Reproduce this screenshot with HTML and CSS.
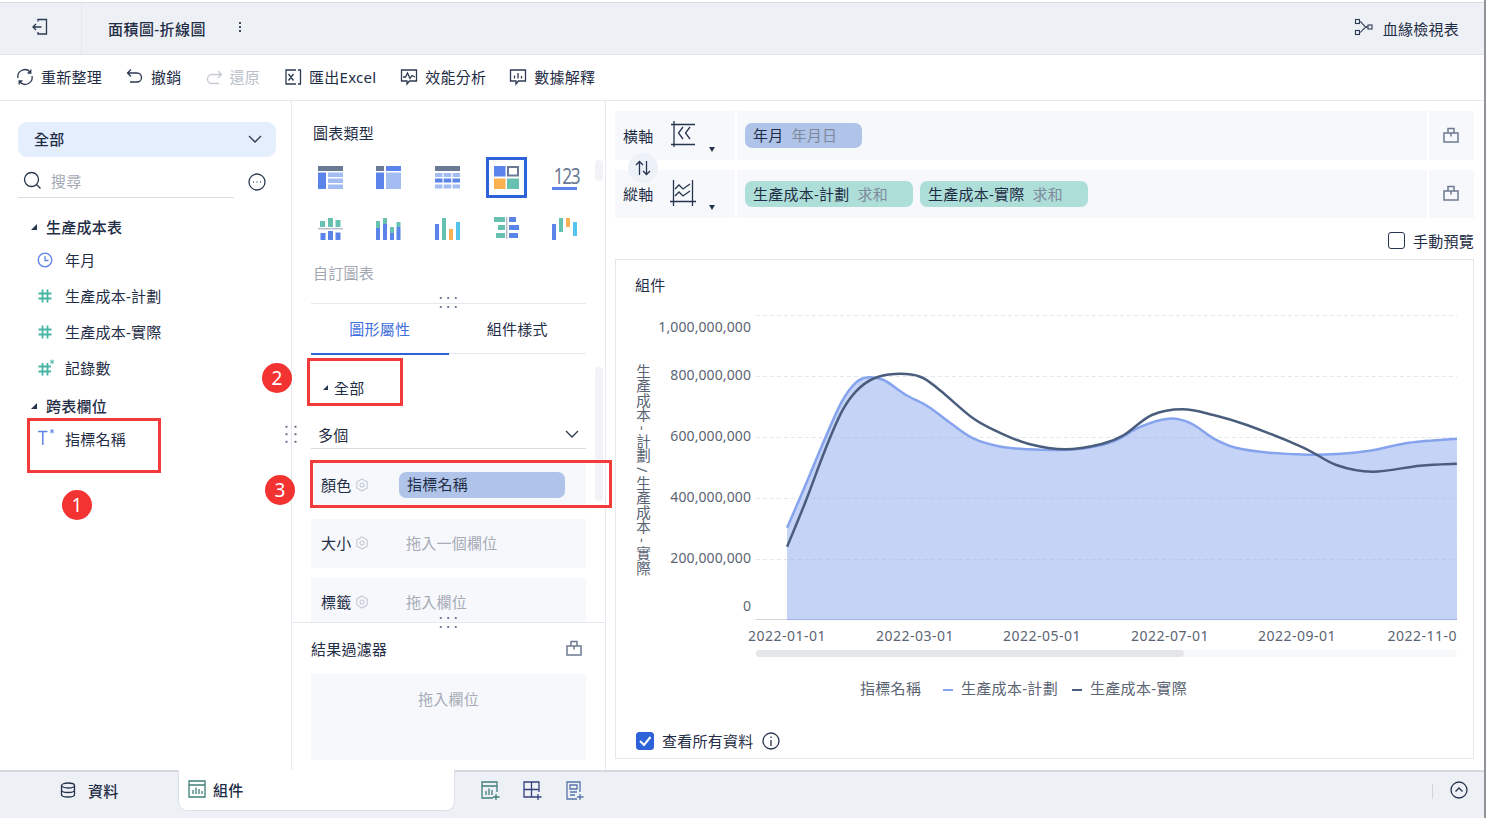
FILE: index.html
```html
<!DOCTYPE html>
<html lang="zh-Hant">
<head>
<meta charset="utf-8">
<title>面積圖-折線圖</title>
<link rel="stylesheet" href="styles.css">
</head>
<body>
<div class="app">
  <header class="titlebar">
    <div class="back">
      <svg width="18" height="18" viewBox="0 0 18 18" class="ic"><path d="M7 3.5V1.5H15.5V16H7V14M10.5 9H2M5 6L2 9L5 12"/></svg>
    </div>
    <div class="doc-title">面積圖-折線圖</div>
    <div class="kebab"><i></i><i></i><i></i></div>
    <div class="lineage">
      <svg width="20" height="18" viewBox="0 0 20 18" class="ic"><rect x="1.5" y="1.5" width="4" height="4"/><rect x="1.5" y="12.5" width="4" height="4"/><rect x="14" y="7" width="4" height="4"/><path d="M5.5 3.5C9 3.5 8 9 14 9M5.5 14.5C9 14.5 8 9 14 9"/></svg>
      <span>血緣檢視表</span>
    </div>
  </header>

  <nav class="toolbar">
    <div class="tool t1"><svg width="18" height="18" viewBox="0 0 18 18" class="ic"><path d="M2 10A7 7 0 0 1 14.5 4.5M16 8A7 7 0 0 1 3.5 13.5M14.8 1.5V5H11.5M3.2 16.5V13H6.5"/></svg><span>重新整理</span></div>
    <div class="tool t2"><svg width="18" height="18" viewBox="0 0 18 18" class="ic"><path d="M5 1.5L1.5 5L5 8.5M1.5 5H11A4.5 4.5 0 0 1 11 14H4"/></svg><span>撤銷</span></div>
    <div class="tool t3 off"><svg width="18" height="18" viewBox="0 0 18 18" class="ic"><path d="M13 3L16.5 6.500L13 10M16.500 6.500H7A4.500 4.500 0 0 0 7 15.500H14"/></svg><span>還原</span></div>
    <div class="tool t4"><svg width="18" height="18" viewBox="0 0 18 18" class="ic"><path d="M12 2H2V16H12M14 2H16.500V16H14M4.500 6L9.500 12.500M9.500 6L4.500 12.500"/></svg><span>匯出Excel</span></div>
    <div class="tool t5"><svg width="18" height="18" viewBox="0 0 18 18" class="ic"><path d="M1.500 2H16.500V13H9.500L7 16V13H1.500ZM3 9H5.500L7.500 5L10 10.500L12 7.500L15 9"/></svg><span>效能分析</span></div>
    <div class="tool t6"><svg width="18" height="18" viewBox="0 0 18 18" class="ic"><path d="M1.500 2H16.500V13H9.500L7 16V13H1.500ZM5.500 7.500V10.500M9 5V10.500M12.500 8V10.500"/></svg><span>數據解釋</span></div>
  </nav>

  <main class="workspace">
    <aside class="fields">
      <div class="scope"><span>全部</span><svg width="14" height="8" viewBox="0 0 14 8" class="ic"><path d="M1 1L7 7L13 1"/></svg></div>
      <div class="search-row">
        <div class="search">
          <svg width="19" height="19" viewBox="0 0 19 19" class="ic dark"><circle cx="8.500" cy="8.500" r="7"/><path d="M13.500 13.500L17.500 17.500"/></svg>
          <span>搜尋</span>
        </div>
        <svg width="18" height="18" viewBox="0 0 18 18" class="ic more"><circle cx="9" cy="9" r="8"/><path d="M5 9H5.800M8.600 9H9.400M12.200 9H13" stroke-width="1.600"/></svg>
      </div>
      <div class="group"><i class="tri"></i>生產成本表</div>
      <div class="field"><svg width="16" height="16" viewBox="0 0 16 16" class="ic blue"><circle cx="8" cy="8" r="6.800"/><path d="M8 4V8.500H11.500"/></svg><span>年月</span></div>
      <div class="field"><svg width="16" height="16" viewBox="0 0 16 16" class="ic teal"><path d="M5.500 1.500V14.500M10.500 1.500V14.500M1.500 5.500H14.500M1.500 10.500H14.500"/></svg><span>生產成本-計劃</span></div>
      <div class="field"><svg width="16" height="16" viewBox="0 0 16 16" class="ic teal"><path d="M5.500 1.500V14.500M10.500 1.500V14.500M1.500 5.500H14.500M1.500 10.500H14.500"/></svg><span>生產成本-實際</span></div>
      <div class="field"><svg width="18" height="18" viewBox="0 0 18 18" class="ic teal"><path d="M5.500 4V16.500M10.500 4V16.500M1.500 7.500H14M1.500 12.500H14"/><path class="star" d="M15 0.500V5M13 1.500L17 4M17 1.500L13 4"/></svg><span class="after-wide">記錄數</span></div>
      <div class="group second"><i class="tri"></i>跨表欄位</div>
      <div class="field"><svg width="18" height="18" viewBox="0 0 18 18" class="ic blue t-icon"><path d="M1 3.500H10.500M5.800 3.500V17"/><path class="star" d="M15 1V5.500M13 2L17 4.500M17 2L13 4.500"/></svg><span class="after-wide">指標名稱</span></div>
    </aside>

    <section class="config">
      <div class="chart-types">
        <h3 class="label">圖表類型</h3>
        <div class="type-grid">
          <div class="type"><svg width="25" height="23" viewBox="0 0 25 23"><rect class="g" width="25" height="5"/><rect class="b" y="6.500" width="8" height="16.500"/><rect class="l" x="10" y="6.500" width="15" height="4.500"/><rect class="l" x="10" y="12.500" width="15" height="4.500"/><rect class="l" x="10" y="18.500" width="15" height="4.500"/></svg></div>
          <div class="type"><svg width="25" height="23" viewBox="0 0 25 23"><rect class="g" width="8" height="5"/><rect class="b" x="10" width="15" height="5"/><rect class="b" y="6.500" width="8" height="16.500"/><rect class="l" x="10" y="6.500" width="15" height="16.500"/></svg></div>
          <div class="type"><svg width="25" height="23" viewBox="0 0 25 23"><rect class="g" width="25" height="5"/><rect class="l" y="7" width="7.500" height="4"/><rect class="l" x="8.700" y="7" width="7.500" height="4"/><rect class="l" x="17.500" y="7" width="7.500" height="4"/><rect class="b" y="12.500" width="7.500" height="4"/><rect class="b" x="8.700" y="12.500" width="7.500" height="4"/><rect class="b" x="17.500" y="12.500" width="7.500" height="4"/><rect class="l" y="18.500" width="7.500" height="4"/><rect class="l" x="8.700" y="18.500" width="7.500" height="4"/><rect class="l" x="17.500" y="18.500" width="7.500" height="4"/></svg></div>
          <div class="type selected"><svg width="25" height="23" viewBox="0 0 25 23"><rect class="b" width="11.500" height="10.500"/><rect x="14" y="1" width="10" height="8.500" fill="#fff" stroke="#6b7a94" stroke-width="2"/><rect class="o" y="12.500" width="11.500" height="10.500"/><rect class="t" x="13" y="12.500" width="12" height="10.500"/></svg></div>
          <div class="type"><div class="num"><span>123</span><i></i></div></div>
          <div class="type"><svg width="25" height="23" viewBox="0 0 25 23"><rect class="t" x="2" y="4" width="5" height="6"/><rect class="t" x="10" y="1" width="5" height="9"/><rect class="t" x="17.500" y="3" width="5" height="7"/><rect class="g2" y="11" width="25" height="1.500"/><rect class="b" x="2.500" y="16" width="5" height="7"/><rect class="b" x="10" y="14" width="5" height="9"/><rect class="b" x="17.500" y="15.500" width="5" height="7.500"/></svg></div>
          <div class="type"><svg width="25" height="23" viewBox="0 0 25 23"><rect class="t" y="4" width="4" height="7"/><rect class="b" y="11" width="4" height="12"/><rect class="t" x="7" y="1" width="4" height="6"/><rect class="b" x="7" y="7" width="4" height="16"/><rect class="t" x="14" y="10" width="4" height="6"/><rect class="b" x="14" y="16" width="4" height="7"/><rect class="t" x="20.500" y="5" width="4" height="5"/><rect class="b" x="20.500" y="10" width="4" height="13"/></svg></div>
          <div class="type"><svg width="25" height="23" viewBox="0 0 25 23"><rect class="b" y="7" width="4" height="16"/><rect class="t" x="7" y="1" width="4" height="22"/><rect class="o" x="14" y="12" width="4" height="11"/><rect class="c" x="21" y="5" width="4" height="18"/></svg></div>
          <div class="type"><svg width="25" height="23" viewBox="0 0 25 23"><rect class="t" width="11" height="5"/><rect class="t" x="4" y="8" width="7" height="5"/><rect class="t" x="2" y="16" width="9" height="5"/><rect class="g2" x="12" width="1.500" height="22"/><rect class="b" x="15" width="7" height="5"/><rect class="b" x="15" y="8" width="10" height="5"/><rect class="b" x="15" y="16" width="9" height="5"/></svg></div>
          <div class="type"><svg width="25" height="23" viewBox="0 0 25 23"><rect class="b" y="7" width="4" height="16"/><rect class="t" x="7" y="1" width="4" height="14"/><rect class="o" x="14" y="1" width="4" height="9"/><rect class="c" x="21" y="5" width="4" height="14"/></svg></div>
        </div>
        <div class="custom">自訂圖表</div>
      </div>
      <div class="props">
        <div class="tabs"><div class="tab active">圖形屬性</div><div class="tab">組件樣式</div></div>
        <div class="all"><i class="tri"></i>全部</div>
        <div class="multi"><span>多個</span><svg width="14" height="8" viewBox="0 0 14 8" class="ic"><path d="M1 1L7 7L13 1"/></svg></div>
        <div class="slot s-color"><label>顏色</label><svg width="14" height="14" viewBox="0 0 14 14" class="gear"><path d="M7 1L12.200 4V10L7 13L1.800 10V4Z"/><circle cx="7" cy="7" r="2"/></svg><div class="pill blue-pill">指標名稱</div></div>
        <div class="slot s-size"><label>大小</label><svg width="14" height="14" viewBox="0 0 14 14" class="gear"><path d="M7 1L12.200 4V10L7 13L1.800 10V4Z"/><circle cx="7" cy="7" r="2"/></svg><span class="hint">拖入一個欄位</span></div>
        <div class="slot s-tag"><label>標籤</label><svg width="14" height="14" viewBox="0 0 14 14" class="gear"><path d="M7 1L12.200 4V10L7 13L1.800 10V4Z"/><circle cx="7" cy="7" r="2"/></svg><span class="hint">拖入欄位</span></div>
        <div class="grip h bottom-grip"></div>
      </div>
      <div class="filter">
        <div class="grip h filter-grip"></div>
        <div class="filter-head"><span>結果過濾器</span><svg width="16" height="16" viewBox="0 0 16 16" class="ic lock"><path d="M1 6H15V15H1ZM5 6V1.500H11V6M8 6V9.500"/></svg></div>
        <div class="drop">拖入欄位</div>
      </div>
      <div class="grip h g-a"></div>
      <div class="grip h g-b"></div>
      <div class="thumb th1"></div>
      <div class="thumb th2"></div>
    </section>

    <section class="canvas">
      <div class="axis first">
        <div class="axis-name"><span>橫軸</span>
          <svg width="26" height="26" viewBox="0 0 26 26" class="ic dark"><path d="M1 3.500H25M1 23.500H25M4 0V26M13 6L8.500 12L13 18M20 6L15.500 12L20 18"/></svg><i class="caret"></i>
        </div>
        <div class="axis-body"><div class="pill blue-pill wide"><span>年月</span><em>年月日</em></div></div>
        <div class="axis-lock"><svg width="16" height="16" viewBox="0 0 16 16" class="ic lock"><path d="M1 6H15V15H1ZM5 6V1.500H11V6M8 6V9.500"/></svg></div>
      </div>
      <div class="axis second">
        <div class="axis-name"><span>縱軸</span>
          <svg width="26" height="26" viewBox="0 0 26 26" class="ic dark"><path d="M0 21.500H26M3.500 0V26M22.500 0V26M5 9L9 5L13 9L20 4M5 16L9 12L13 16L20 11"/></svg><i class="caret"></i>
        </div>
        <div class="axis-body"><div class="pill teal-pill"><span>生產成本-計劃</span><em>求和</em></div><div class="pill teal-pill"><span>生產成本-實際</span><em>求和</em></div></div>
        <div class="axis-lock"><svg width="16" height="16" viewBox="0 0 16 16" class="ic lock"><path d="M1 6H15V15H1ZM5 6V1.500H11V6M8 6V9.500"/></svg></div>
      </div>
      <div class="swap"><svg width="16" height="16" viewBox="0 0 16 16" class="ic dark"><path d="M4.500 15V1.500M1 5L4.500 1.500L8 5M11.500 1V14.500M8 11L11.500 14.500L15 11"/></svg></div>
      <div class="manual"><i class="box"></i><span>手動預覽</span></div>
      <div class="card">
        <div class="card-title">組件</div>
        <svg class="chart" width="857" height="410" viewBox="616 300 857 410">
          <g class="grid">
            <path d="M755.800 315.500H1457M755.800 376.500H1457M755.800 437.500H1457M755.800 498.500H1457M755.800 559.500H1457"/>
          </g>
          <path id="area" fill="#8aa8ee" fill-opacity="0.5"/>
          <path d="M755.800 619.500H1457" stroke="#cfd3da" stroke-width="1"/>
          <path d="M787 619.500H1457" stroke="#9db3e3" stroke-width="1"/>
          <path id="plan" fill="none" stroke="#86a4ee" stroke-width="2.500"/>
          <path id="actual" fill="none" stroke="#4a5d7d" stroke-width="2.500"/>
          <g class="ylab">
            <text x="751" y="332">1,000,000,000</text>
            <text x="751" y="380">800,000,000</text>
            <text x="751" y="441">600,000,000</text>
            <text x="751" y="502">400,000,000</text>
            <text x="751" y="563">200,000,000</text>
            <text x="751" y="611">0</text>
          </g>
          <g class="xlab">
            <text x="787" y="641">2022-01-01</text>
            <text x="915" y="641">2022-03-01</text>
            <text x="1042" y="641">2022-05-01</text>
            <text x="1170" y="641">2022-07-01</text>
            <text x="1297" y="641">2022-09-01</text>
            <text x="1457" y="641" class="end">2022-11-0</text>
          </g>
          <text class="ytitle" x="643" y="364">生產成本 - 計劃 / 生產成本 - 實際</text>
          <rect x="755.800" y="650" width="701" height="7" rx="3.500" fill="#f6f7f8"/>
          <rect x="755.800" y="650" width="428" height="7" rx="3.500" fill="#e3e5e9"/>
          <g class="legend">
            <text x="860" y="694">指標名稱</text>
            <rect x="943" y="689" width="10" height="2" fill="#86a4ee"/>
            <text x="961" y="694">生產成本-計劃</text>
            <rect x="1072" y="689" width="10" height="2" fill="#4a5d7d"/>
            <text x="1090" y="694">生產成本-實際</text>
          </g>
        </svg>
        <div class="see-all">
          <i class="box on"><svg width="18" height="18" viewBox="0 0 18 18"><path d="M4 9L8 13L14.500 5" fill="none" stroke="#fff" stroke-width="2"/></svg></i>
          <span>查看所有資料</span>
          <svg width="18" height="18" viewBox="0 0 18 18" class="ic dark"><circle cx="9" cy="9" r="8"/><path d="M9 8V14M9 4.500V6"/></svg>
        </div>
      </div>
    </section>
  </main>

  <footer class="bottom">
    <div class="btab data"><svg width="16" height="16" viewBox="0 0 16 16" class="ic dark"><ellipse cx="8" cy="3.500" rx="6.500" ry="2.500"/><path d="M1.500 3.500V12.500C1.500 14 4.500 15 8 15S14.500 14 14.500 12.500V3.500M1.500 8C1.500 9.500 4.500 10.500 8 10.500S14.500 9.500 14.500 8"/></svg><span>資料</span></div>
    <div class="btab comp"><svg width="18" height="18" viewBox="0 0 18 18" class="ic green"><path d="M1 1H17V17H1ZM1 5H17M5 14V10M8 14V7.500M11 14V9M14 14V11"/></svg><span>組件</span></div>
    <div class="adders">
      <svg width="20" height="20" viewBox="0 0 20 20" class="ic green"><path d="M12 17H1V1H16V11M1 5H16M5 14V10M8 14V7.500M11 14V9M15 13V19M12 16H18.500"/></svg>
      <svg width="20" height="20" viewBox="0 0 20 20" class="ic navy"><path d="M12 16H1V1H16V11M8.500 1V16M1 8.500H16M15 13V19M12 16H18.500"/></svg>
      <svg width="20" height="20" viewBox="0 0 20 20" class="ic steel"><path d="M12 18H2V1H15V11M5 4H12V8H5ZM5 11H12M5 14H10M15 13V19M12 16H18.500"/></svg>
    </div>
    <div class="collapse"><svg width="18" height="18" viewBox="0 0 18 18" class="ic dark"><circle cx="9" cy="9" r="8"/><path d="M5.500 10.500L9 7L12.500 10.500"/></svg></div>
  </footer>

  <div class="mark m1"></div>
  <div class="mark m2"></div>
  <div class="mark m3"></div>
  <div class="badge b1">1</div>
  <div class="badge b2">2</div>
  <div class="badge b3">3</div>
  <div class="grip v"></div>
</div>
<script src="chart.js"></script>
</body>
</html>
```
FILE: styles.css
```css
* { box-sizing: border-box; }
html, body { margin: 0; padding: 0; background: #fff; }
body { font-family: "Noto Sans", "Noto Sans CJK TC", sans-serif; font-size: 15px; letter-spacing: .25px; color: #1f2d46; overflow: hidden; }
i, em { font-style: normal; }
h3 { margin: 0; font-weight: 400; font-size: 15px; }
svg { display: block; flex: none; }
.ic { fill: none; stroke: #2c3a52; stroke-width: 1.3; }
.ic.dark { stroke: #26344d; }
.ic.blue { stroke: #5d84e6; }
.ic.teal { stroke: #46b5a4; stroke-width: 1.8; }
.ic.lock { stroke: #6d7a90; stroke-width: 1.5; }
.ic.more { stroke: #2c3a52; }
.ic.green { stroke: #3f7f78; }
.ic.navy { stroke: #35407e; }
.ic.steel { stroke: #5573a8; }
.ic .star { stroke-width: .9; }

.app { position: relative; width: 1486px; height: 818px; padding-top: 2px; border-right: 2px solid #8f9298; overflow: hidden; }

.titlebar { height: 53px; background: #edf0f5; border-top: 1px solid #d9dce1; border-bottom: 1px solid #e1e4ea; display: flex; align-items: center; }
.back { width: 82px; height: 100%; border-right: 1px solid #e4e7ec; padding: 0 0 4px 31px; display: flex; align-items: center; }
.doc-title { margin-left: 26px; font-weight: 500; width: 99px; white-space: nowrap; letter-spacing: .45px; }
.kebab { margin-left: 32px; display: flex; flex-direction: column; gap: 2px; margin-top: -3px; }
.kebab i { width: 2px; height: 2px; background: #3c4960; }
.lineage { margin-left: auto; margin-right: 25px; display: flex; align-items: center; gap: 9px; }
.lineage .ic { stroke-width: 1.1; margin-top: -3px; }

.toolbar { height: 46px; border-bottom: 1px solid #e6e9ef; display: flex; align-items: center; padding: 0 0 2px 16px; }
.tool { display: flex; align-items: center; gap: 7px; white-space: nowrap; }
.t2, .t4, .t5 { margin-left: 24px; }
.t3, .t6 { margin-left: 23px; }
.off { color: #b9bfc9; }
.off .ic { stroke: #c6cbd3; }

.workspace { height: 669px; display: flex; }

.fields { width: 292px; flex: none; border-right: 1px solid #e6e9ef; padding: 21px 0 0 18px; }
.scope { width: 258px; height: 35px; background: #e5eefc; border-radius: 9px; display: flex; align-items: center; justify-content: space-between; padding: 0 14px 2px 16px; font-weight: 500; }
.search-row { display: flex; align-items: center; margin-top: 11px; height: 30px; }
.search { width: 216px; height: 30px; border-bottom: 1px solid #d9dce3; display: flex; align-items: center; gap: 9px; padding: 0 0 5px 5px; color: #a2a8b3; }
.more { margin-left: 14px; margin-top: -3px; }
.group { height: 29px; margin-top: 14px; display: flex; align-items: center; padding-left: 13px; font-weight: 500; white-space: nowrap; }
.group.second { margin-top: 6px; }
.tri { width: 0; height: 0; border-left: 6px solid transparent; border-bottom: 6px solid #26344d; margin-right: 9px; }
.field { height: 36px; display: flex; align-items: center; padding: 1px 0 0 19px; white-space: nowrap; }
.field span { margin-left: 12px; }
.field span.after-wide { margin-left: 10px; }
.t-icon { stroke-width: 1.5; margin-top: -4px; }

.config { position: relative; width: 314px; flex: none; border-right: 1px solid #e6e9ef; display: flex; flex-direction: column; }
.chart-types { height: 202px; padding: 21px 0 0 21px; flex: none; }
.chart-types .label { height: 22px; line-height: 22px; }
.type-grid { display: grid; grid-template-columns: repeat(5, 58.600px); grid-auto-rows: 41px; row-gap: 10px; margin: 13px 0 0 -12px; }
.type { display: flex; align-items: center; justify-content: center; justify-self: center; width: 41px; }
.type.selected { outline: 3px solid #2e62d9; outline-offset: -3px; }
.type rect.g { fill: #6b7a94; }
.type rect.g2 { fill: #b9c0cc; }
.type rect.b { fill: #5b84ea; }
.type rect.l { fill: #a3bdf3; }
.type rect.o { fill: #fbb14f; }
.type rect.t { fill: #66c1b1; }
.type rect.c { fill: #54c4ee; }
.num { width: 25px; color: #6b7a94; font-size: 20px; line-height: 19px; letter-spacing: -1.500px; text-align: center; }
.num span { display: block; transform: scale(.86, 1.1); }
.num i { display: block; height: 3px; background: #5b84ea; margin-top: 2px; }
.custom { margin-top: 13px; color: #a2a8b3; height: 22px; line-height: 22px; }

.grip.h { position: absolute; width: 23px; height: 2px; background: radial-gradient(circle, #6b7a94 1px, transparent 1.200px) 0 0 / 7.500px 2px repeat-x; }
.grip.g-a { left: 145px; top: 196px; }
.grip.g-b { left: 145px; top: 205px; }
.props { height: 319px; margin-left: 19px; width: 275px; overflow: hidden; position: relative; flex: none; }
.tabs { height: 51px; display: flex; border-top: 1px solid #e6e9ef; border-bottom: 1px solid #e6e9ef; }
.tab { width: 137.500px; text-align: center; line-height: 50px; white-space: nowrap; height: 50px; }
.tab.active { color: #3f6fdc; border-bottom: 2px solid #2e62d9; height: 51px; }
.all { height: 66px; display: flex; align-items: center; padding-left: 12px; }
.all .tri { margin-right: 6px; border-left-width: 5px; border-bottom-width: 5px; }
.multi { height: 29px; border-bottom: 1px solid #d9dce3; display: flex; align-items: center; justify-content: space-between; padding: 0 7px; }
.slot { background: #f6f8fc; display: flex; align-items: center; padding-left: 10px; white-space: nowrap; }
.slot label { width: 31px; }
.gear { fill: none; stroke: #c3c9d4; stroke-width: 1.100; margin-left: 3px; }
.s-color { height: 45px; margin-top: 13px; }
.s-size { height: 49px; margin-top: 12px; padding-bottom: 2px; }
.s-tag { height: 49px; margin-top: 10px; padding-bottom: 2px; }
.hint { margin-left: 37px; color: #a6abb6; }
.s-color .pill { margin-left: 30px; }
.pill { display: flex; align-items: center; height: 26px; white-space: nowrap; padding: 0 0 2px 8px; border-radius: 7px; color: #1f2d46; }
.blue-pill { background: #afc4e8; width: 166px; }
.pill em { color: #7e8a9c; margin-left: 8px; }
.wide { width: 117px; height: 25px; margin-top: -1px; }
.teal-pill { background: #aeded8; width: 168px; }

.filter { flex: 1; border-top: 1px solid #e6e9ef; padding: 0 19px; position: relative; }
.props .bottom-grip { left: 126px; bottom: 3px; }
.filter .filter-grip { left: 145px; top: 3px; }
.filter-head { height: 51px; display: flex; align-items: center; justify-content: space-between; padding-right: 4px; }
.filter-head .ic { margin-top: -1px; }
.drop { height: 86px; background: #f6f8fc; text-align: center; color: #a6abb6; padding-top: 14px; }
.thumb { position: absolute; left: 303px; width: 8px; background: #f1f3f6; border-radius: 4px; }
.th1 { top: 59px; height: 21px; }
.th2 { top: 266px; height: 134px; }

.canvas { flex: 1; position: relative; padding: 10px 10px 0 9px; min-width: 0; }
.axis { display: flex; background: #f6f8fc; align-items: stretch; }
.axis.first { height: 49px; }
.axis.second { height: 48px; margin-top: 10px; }
.axis-name { width: 122px; border-right: 2px solid #fff; display: flex; padding-left: 8px; position: relative; align-items: center; }
.axis-name span { margin-top: -1px; width: 31px; white-space: nowrap; }
.axis-name .ic { margin: -3px 0 0 16px; }
.caret { position: absolute; left: 94px; bottom: 8px; border-left: 3px solid transparent; border-right: 3px solid transparent; border-top: 5px solid #26344d; }
.axis-body { flex: 1; display: flex; align-items: center; gap: 7px; padding-left: 8px; }
.axis-lock { width: 47px; border-left: 2px solid #fff; display: flex; align-items: center; justify-content: center; padding: 0 2px 2px 0; }
.swap { position: absolute; left: 22px; top: 52px; width: 30px; height: 30px; border-radius: 50%; background: #edf1f8; display: flex; align-items: center; justify-content: center; }
.manual { height: 41px; padding-top: 3px; display: flex; align-items: center; justify-content: flex-end; gap: 8px; }
.box { width: 17px; height: 17px; border: 1px solid #26344d; border-radius: 3px; display: block; }
.card { height: 500px; border: 1px solid #e3e6ec; }
.card-title { height: 40px; padding: 14px 0 0 19px; line-height: 22px; }
.chart { display: block; }
.grid path { fill: none; stroke: #e4e7ec; stroke-width: 1; stroke-dasharray: 4 3; }
.ylab text { text-anchor: end; font-size: 14px; fill: #5a6473; letter-spacing: .1px; }
.xlab text { text-anchor: middle; font-size: 14px; fill: #5a6473; letter-spacing: .5px; }
.xlab .end { text-anchor: end; }
.ytitle { writing-mode: vertical-rl; font-size: 14.500px; fill: #5a6473; letter-spacing: 0; }
.legend text { font-size: 15px; fill: #5a6473; letter-spacing: .3px; }
.see-all { display: flex; align-items: center; padding: 20px 0 0 20px; gap: 8px; }
.box.on { background: #2e62d9; border-color: #2e62d9; width: 18px; height: 18px; }
.box.on svg { margin: -1px; }

.bottom { height: 48px; background: #edf0f5; border-top: 2px solid #d5d8de; display: flex; position: relative; }
.btab { display: flex; align-items: center; white-space: nowrap; }
.btab.data { width: 178px; padding: 0 0 10px 60px; gap: 12px; font-weight: 500; }
.btab.comp { width: 277px; height: 41px; margin-top: -2px; background: #fff; border: 1px solid #dcdfe5; border-top: 0; border-radius: 0 0 9px 9px; padding: 0 0 2px 9px; gap: 7px; font-weight: 500; }
.adders { display: flex; margin-left: 26px; gap: 22px; padding-top: 9px; }
.collapse { margin-left: auto; margin-right: 16px; padding: 9px 0 0 18px; height: 38px; position: relative; }
.collapse::before { content: ""; position: absolute; left: 0; top: 12px; height: 15px; width: 1px; background: #cfd3da; }

.mark { position: absolute; border: 3px solid #f33b3b; }
.m1 { left: 27px; top: 418px; width: 134px; height: 55px; }
.m2 { left: 307px; top: 358px; width: 96px; height: 48px; }
.m3 { left: 310px; top: 460px; width: 302px; height: 48px; }
.badge { position: absolute; width: 30px; height: 30px; border-radius: 50%; background: #f33232; color: #fff; font-size: 19px; line-height: 30px; text-align: center; letter-spacing: 0; }
.b1 { left: 62px; top: 490px; }
.b2 { left: 262px; top: 363px; }
.b3 { left: 265px; top: 475px; }
.grip.v { position: absolute; left: 282px; top: 423px; width: 18px; height: 22px; background: radial-gradient(circle, #5c6880 1px, transparent 1.200px) 0 0 / 9px 7.500px; }
```
FILE: chart.js
```js
// Data points of the two series, as measured against the chart's plot area.
var sx = function (x) { return 610 + x / 1.79; };
var sy = function (y) { return 300 + y / 3; };
var plan = [[317,683],[350,555],[385,415],[415,305],[440,248],[462,232],[490,240],[530,285],[570,320],[610,370],[650,415],[700,440],[750,448],[800,450],[850,445],[900,425],[950,380],[1000,356],[1040,370],[1080,415],[1120,443],[1180,458],[1250,464],[1300,462],[1360,452],[1430,428],[1516,416]];
var actual = [[317,740],[350,605],[385,450],[415,335],[440,275],[470,237],[510,222],[555,230],[590,270],[650,355],[700,400],[750,432],[815,448],[880,432],[920,405],[970,345],[1025,328],[1080,345],[1140,375],[1240,442],[1300,495],[1365,515],[1450,497],[1516,491]];

function smooth(points) {
  var p = points.map(function (q) { return [sx(q[0]), sy(q[1])]; });
  var d = "M" + p[0][0].toFixed(1) + " " + p[0][1].toFixed(1);
  for (var i = 0; i < p.length - 1; i++) {
    var a = p[Math.max(i - 1, 0)], b = p[i], c = p[i + 1], e = p[Math.min(i + 2, p.length - 1)];
    d += "C" + (b[0] + (c[0] - a[0]) / 6).toFixed(1) + " " + (b[1] + (c[1] - a[1]) / 6).toFixed(1) +
         " " + (c[0] - (e[0] - b[0]) / 6).toFixed(1) + " " + (c[1] - (e[1] - b[1]) / 6).toFixed(1) +
         " " + c[0].toFixed(1) + " " + c[1].toFixed(1);
  }
  return d;
}

var planPath = smooth(plan);
document.getElementById("plan").setAttribute("d", planPath);
document.getElementById("actual").setAttribute("d", smooth(actual));
document.getElementById("area").setAttribute("d", planPath + "L1457 619.5L787 619.5Z");
```
